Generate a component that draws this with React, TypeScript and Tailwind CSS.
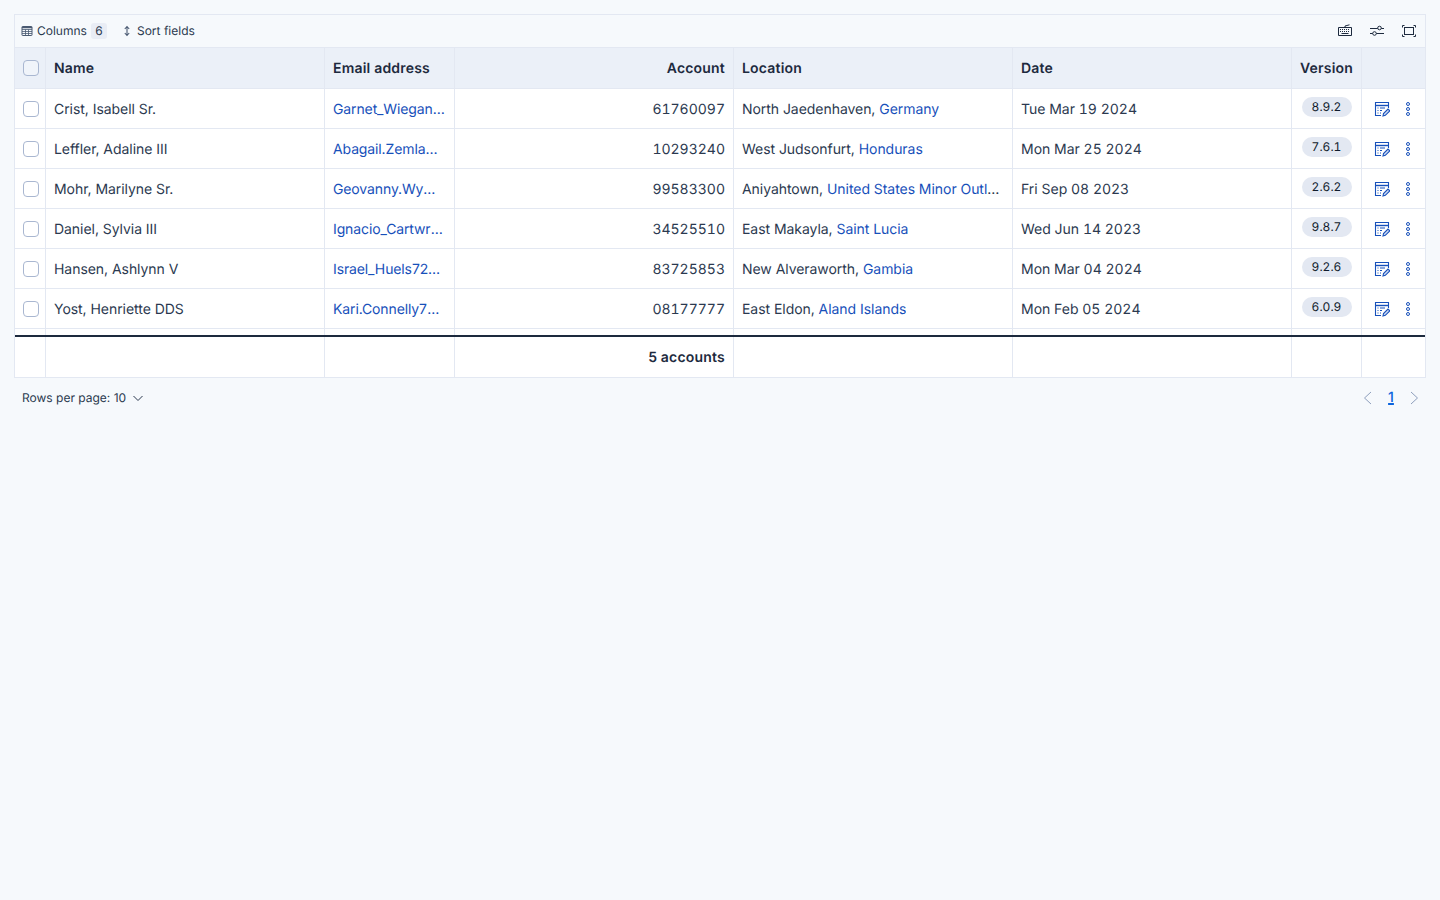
import React from "react";

const cols = "grid grid-cols-[31px_279px_130px_279px_279px_279px_70px_64px]";
const cell = "border-r border-[#e3e8f2] last:border-r-0 flex items-center min-w-0";
const txt = "pt-[2px] px-2";

const rows = [
  ["Crist, Isabell Sr.", "Garnet_Wiegand12@gmail.com", "61760097", "North Jaedenhaven, ", "Germany", "Tue Mar 19 2024", "8.9.2"],
  ["Leffler, Adaline III", "Abagail.Zemlam45@yahoo.com", "10293240", "West Judsonfurt, ", "Honduras", "Mon Mar 25 2024", "7.6.1"],
  ["Mohr, Marilyne Sr.", "Geovanny.Wyman33@gmail.com", "99583300", "Aniyahtown, ", "United States Minor Outlying Islands", "Fri Sep 08 2023", "2.6.2"],
  ["Daniel, Sylvia III", "Ignacio_Cartwright@hotmail.com", "34525510", "East Makayla, ", "Saint Lucia", "Wed Jun 14 2023", "9.8.7"],
  ["Hansen, Ashlynn V", "Israel_Huels72@gmail.com", "83725853", "New Alveraworth, ", "Gambia", "Mon Mar 04 2024", "9.2.6"],
  ["Yost, Henriette DDS", "Kari.Connelly77@yahoo.com", "08177777", "East Eldon, ", "Aland Islands", "Mon Feb 05 2024", "6.0.9"],
];

const Check = ({ head }: { head?: boolean }) => (
  <span className={`block w-4 h-4 rounded-[4px] border border-[#a9b7d1] ${head ? "bg-[#f0f4fa]" : "bg-white"}`} />
);

const TableIcon = () => (
  <svg width="12" height="12" viewBox="0 0 12 12" fill="none" stroke="#4a5a72" strokeWidth="1">
    <rect x="1" y="1.5" width="10" height="9" rx="0.5" />
    <path d="M1 4.5h10M1 6.5h10M1 8.5h10M4.5 4.5v6M7.5 4.5v6" strokeWidth="0.8" />
    <path d="M1 2.5h10" strokeWidth="1.5" />
  </svg>
);

const SortIcon = () => (
  <svg width="12" height="12" viewBox="0 0 12 12" fill="none" stroke="#4a5a72" strokeWidth="1.1">
    <path d="M6 1.500v9M3.800 4l2.200-2.500L8.200 4M3.800 8l2.200 2.500L8.200 8" />
  </svg>
);

const Keyboard = () => (
  <svg width="16" height="16" viewBox="0 0 16 16" fill="none" stroke="#1d2a3e" strokeWidth="1">
    <path d="M1.500 4.500h13v8h-13zM8 4.500V3l4.500-1.200" />
    <path d="M3 6.500h10M3 8.500h10" strokeDasharray="1 1" />
    <path d="M4.500 10.500h7" />
  </svg>
);

const Sliders = () => (
  <svg width="16" height="16" viewBox="0 0 16 16" fill="none" stroke="#1d2a3e" strokeWidth="1">
    <path d="M1 5.500h7.700M12.300 5.500H15M1 10.500h2.700M7.300 10.500H15" />
    <circle cx="10.500" cy="5" r="1.800" />
    <circle cx="5.500" cy="10.500" r="1.800" />
  </svg>
);

const Fullscreen = () => (
  <svg width="16" height="16" viewBox="0 0 16 16" fill="none" stroke="#1d2a3e" strokeWidth="1">
    <rect x="3.500" y="4.500" width="9" height="7" />
    <path d="M1.500 4.500V2.500h2M12.500 2.500h2v2M1.500 11.500v2h2M12.500 13.500h2v-2" />
  </svg>
);

const EditIcon = () => (
  <svg width="16" height="16" viewBox="0 0 16 16" fill="none" stroke="#1750ba" strokeWidth="1.1">
    <path d="M14.500 7V1.500h-13v13H7" />
    <path d="M1.500 4.500h13" strokeWidth="1.400" />
    <path d="M3.500 7h1M6 7h5M3.500 9.500h1M6 9.500h2M3.500 12h1M6 12h1" />
    <path d="M9 15l.5-2.500 4.500-4.500 1.800 1.800-4.500 4.500z" fill="#cfdcf5" />
  </svg>
);

const Dots = () => (
  <svg width="6" height="16" viewBox="0 0 6 16" fill="none" stroke="#1750ba" strokeWidth="1">
    <circle cx="3" cy="3" r="1.500" />
    <circle cx="3" cy="8" r="1.500" />
    <circle cx="3" cy="13" r="1.500" />
  </svg>
);

export default function App() {
  return (
    <div
      className="min-h-[900px] bg-[#f6f9fc] pt-[14px] px-[14px] text-[#2b394f] text-sm [text-rendering:geometricPrecision]"
      style={{ fontFamily: "Inter, 'Liberation Sans', sans-serif" }}
    >
      <div className="border border-[#e3e8f2]">
        <div className="h-[32px] flex items-center justify-between pl-[6px] pr-[8px] text-xs">
          <div className="flex items-center">
            <TableIcon />
            <span className="ml-[4px]">Columns</span>
            <span className="ml-[4px] w-[16px] h-[16px] flex items-center justify-center rounded-[3px] bg-[#e9edf5]">6</span>
            <span className="ml-[14px]"><SortIcon /></span>
            <span className="ml-[4px] tracking-[0.02px]">Sort fields</span>
          </div>
          <div className="flex items-center gap-[16px]">
            <Keyboard />
            <Sliders />
            <Fullscreen />
          </div>
        </div>

        <div className={`${cols} h-[42px] bg-[#ebf0f8] border-y border-[#e3e8f2] font-semibold text-[#1d2a3e] tracking-[0.2px]`}>
          <div className={`${cell} justify-center pl-[1px]`}><Check head /></div>
          <div className={`${cell} ${txt}`}>Name</div>
          <div className={`${cell} ${txt}`}>Email address</div>
          <div className={`${cell} ${txt} justify-end`}>Account</div>
          <div className={`${cell} ${txt}`}>Location</div>
          <div className={`${cell} ${txt}`}>Date</div>
          <div className={`${cell} ${txt}`}>Version</div>
          <div className={cell} />
        </div>

        <div className="bg-white">
          {rows.map((r) => (
            <div key={r[0]} className={`${cols} h-[40px] border-b border-[#e3e8f2] tracking-[-0.05px]`}>
              <div className={`${cell} justify-center pl-[1px]`}><Check /></div>
              <div className={`${cell} ${txt}`}>{r[0]}</div>
              <div className={`${cell} ${txt}`}>
                <span className="truncate text-[#1750ba] tracking-[-0.12px]">{r[1]}</span>
              </div>
              <div className={`${cell} ${txt} justify-end tabular-nums tracking-normal`}>{r[2]}</div>
              <div className={`${cell} ${txt}`}>
                <span className="truncate">
                  {r[3]}
                  <span className="text-[#1750ba]">{r[4]}</span>
                </span>
              </div>
              <div className={`${cell} ${txt} tabular-nums tracking-normal`}>{r[5]}</div>
              <div className={`${cell} justify-center pb-[4px]`}>
                <span className="h-[20px] w-[50px] rounded-full bg-[#e3e8f2] text-xs tabular-nums tracking-normal text-[#111c2c] flex items-center justify-center">{r[6]}</span>
              </div>
              <div className={`${cell} pl-[12px]`}>
                <EditIcon />
                <span className="ml-[15px]"><Dots /></span>
              </div>
            </div>
          ))}
          <div className={`${cols} h-[6px]`}>
            {[0, 1, 2, 3, 4, 5, 6, 7].map((i) => <div key={i} className={cell} />)}
          </div>
          <div className={`${cols} h-[42px] border-t-2 border-[#1d2a3e] font-semibold text-[#1d2a3e] tracking-[0.2px]`}>
            <div className={cell} />
            <div className={cell} />
            <div className={cell} />
            <div className={`${cell} ${txt} justify-end`}>5 accounts</div>
            <div className={cell} />
            <div className={cell} />
            <div className={cell} />
            <div className={cell} />
          </div>
        </div>
      </div>

      <div className="h-[40px] flex items-center justify-between pl-[8px] pr-[4px] text-xs">
        <div className="flex items-center">
          <span>Rows per page: 10</span>
          <svg className="ml-[6px]" width="12" height="12" viewBox="0 0 12 12" fill="none" stroke="#2b394f" strokeWidth="1">
            <path d="M1.500 4l4.500 4.500L10.500 4" />
          </svg>
        </div>
        <div className="flex items-center">
          <svg width="16" height="16" viewBox="0 0 16 16" fill="none" stroke="#8e9fbc" strokeWidth="1">
            <path d="M11 2L4.500 8l6.500 6" />
          </svg>
          <span className="ml-[8px] w-[14px] text-center text-sm font-medium text-[#0b64dd] underline decoration-2">1</span>
          <svg className="ml-[8px]" width="16" height="16" viewBox="0 0 16 16" fill="none" stroke="#8e9fbc" strokeWidth="1">
            <path d="M5 2l6.500 6L5 14" />
          </svg>
        </div>
      </div>
    </div>
  );
}
